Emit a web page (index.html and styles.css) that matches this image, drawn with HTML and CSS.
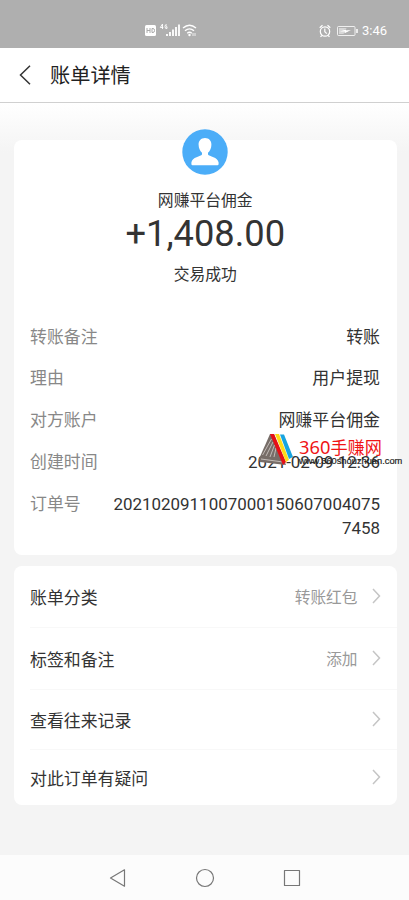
FILE: index.html
```html
<!DOCTYPE html>
<html lang="zh-CN">
<head>
<meta charset="utf-8">
<meta name="viewport" content="width=device-width, initial-scale=1">
<title>账单详情</title>
<link rel="stylesheet" href="styles.css">
</head>
<body>
<div class="status">
  <svg class="status-left" width="54" height="18" viewBox="0 0 54 18" fill="none" stroke="#fff">
    <rect x="1" y="5" width="11" height="11" rx="1.500" fill="#fff" stroke="none"/>
    <path d="M3 8v5M6 8v5M3 10.500h3M8 8.500v4h1q1.500 0 1.500-2t-1.500-2z" stroke="#aaa"/>
    <path d="M18.500 9V4l-2.200 3.500h3M23 5q-2-1-2 1.500T23 8.500V6.700h-1" stroke-width=".9"/>
    <path d="M24 16v-2M27 16v-4M30 16V9.500M33 16V7M36 16V4.500" stroke-width="1.800" transform="translate(-1)"/>
    <path d="M39 8q6.500-5.500 13 0M41 10.700q4.500-3.700 9 0M43.200 13.200q2.300-1.800 4.600 0" stroke-width="1.400"/>
    <circle cx="45.500" cy="15" r="1.200" fill="#fff" stroke="none"/>
    <path d="M49 13v3M51 13v3" stroke-width=".8"/>
  </svg>
  <div class="status-right">
    <svg width="39" height="14" viewBox="0 0 39 14" fill="none" stroke="#fff">
      <circle cx="6" cy="7.500" r="4.700" stroke-width="1.200"/>
      <path d="M.7 3.700 3.500 1.200M8.500 1.200l2.800 2.500M2.800 11.500l-1.300 1.300M9.200 11.500l1.300 1.300M5.800 4.500v3.200l2 2" stroke-width="1.200"/>
      <rect x="18.500" y="2.500" width="17.500" height="9" rx="1" stroke-opacity=".8"/>
      <path d="M20 4h8l-3 2h6l-7 4h-4z" fill="#fff" fill-opacity=".5" stroke="none"/>
      <path d="m21 7.500 6-2v1.200l5-.7-6 3V7.600z" fill="#fff" stroke="none"/>
      <path d="M38 5v4" stroke-width="1.500"/>
    </svg>
    <span>3:46</span>
  </div>
</div>
<header class="header">
  <svg width="12" height="20" viewBox="0 0 12 20"><path d="M11 .8 1.500 10l9.500 9.200" fill="none" stroke="#333" stroke-width="1.500"/></svg>
  <h1>账单详情</h1>
</header>
<main class="main">
  <section class="card bill">
    <div class="summary">
      <svg class="avatar" width="46" height="46" viewBox="0 0 46 46">
        <circle cx="23" cy="23" r="22.700" fill="#4badf8"/>
        <path d="M23 9c-4 0-6.600 2.900-6.400 6.800.1 3.600 1.300 6 3.400 8v1.700c-1 2-10 2.500-10.600 8V35q0 1.200 1.200 1.200h24.800q1.200 0 1.200-1.200v-1.500C36 28 27 27.500 26 25.500v-1.700c2.100-2 3.300-4.400 3.400-8C29.600 11.900 27 9 23 9z" fill="#fff"/>
      </svg>
      <div class="payee">网赚平台佣金</div>
      <div class="amount">+1,408.00</div>
      <div class="state">交易成功</div>
    </div>
    <dl class="details">
      <div class="detail"><dt>转账备注</dt><dd>转账</dd></div>
      <div class="detail"><dt>理由</dt><dd>用户提现</dd></div>
      <div class="detail"><dt>对方账户</dt><dd>网赚平台佣金</dd></div>
      <div class="detail"><dt>创建时间</dt><dd>2021-02-09 12:36</dd></div>
      <div class="detail"><dt>订单号</dt><dd>2021020911007000150607004075<br>7458</dd></div>
    </dl>
    <div class="watermark">
      <svg width="36" height="33" viewBox="0 0 36 33">
        <path d="M11 1h4l12 31L1 29l-1-3z" fill="#776d68"/>
        <path d="m12.500 6-9 16M14 9 7 23M15.500 12 11 24M17 15l-2 9M2 26l22 3" fill="none" stroke="#e4dedb" stroke-width=".7"/>
        <path d="M11 1h4l12 28-3 3z" fill="#e60f16"/>
        <path d="M16 1h4l10 26-3 2z" fill="#ffdb18"/>
        <path d="M21 1.500h4L34 24l-4 2z" fill="#18a4df"/>
      </svg>
      <div class="brand">360<span>手赚网</span></div>
      <div class="url">www.360shouzhuan.com</div>
    </div>
  </section>
  <nav class="card menu">
    <a class="item"><span>账单分类</span><em>转账红包</em><svg width="9" height="16" viewBox="0 0 9 16"><path d="m1 1 6.500 7L1 15"/></svg></a>
    <a class="item"><span>标签和备注</span><em>添加</em><svg width="9" height="16" viewBox="0 0 9 16"><path d="m1 1 6.500 7L1 15"/></svg></a>
    <a class="item"><span>查看往来记录</span><svg width="9" height="16" viewBox="0 0 9 16"><path d="m1 1 6.500 7L1 15"/></svg></a>
    <a class="item"><span>对此订单有疑问</span><svg width="9" height="16" viewBox="0 0 9 16"><path d="m1 1 6.500 7L1 15"/></svg></a>
  </nav>
</main>
<footer class="navbar">
  <svg width="18" height="20" viewBox="0 0 18 20"><path d="M15.500 1.800v16.400L1.500 10z"/></svg>
  <svg width="20" height="20" viewBox="0 0 20 20"><circle cx="10" cy="10" r="8.500"/></svg>
  <svg width="18" height="20" viewBox="0 0 18 20"><rect x="1.500" y="2.500" width="15" height="15"/></svg>
</footer>
</body>
</html>
```
FILE: styles.css
```css
* { box-sizing: border-box; }
body {
  margin: 0;
  height: 900px;
  display: flex;
  flex-direction: column;
  background: #f4f4f4;
  color: #333;
  font-family: Roboto, "Noto Sans CJK SC", sans-serif;
  font-size: 16.9px;
}
svg { display: block; flex: none; }
.status {
  height: 48px;
  flex: none;
  display: flex;
  justify-content: space-between;
  padding: 20px 22px 0 144px;
  background: #afafaf;
}
.status-right {
  display: flex;
  align-items: center;
  gap: 4px;
  height: 21px;
  color: #fff;
  font-size: 13px;
}
.header {
  height: 55px;
  flex: none;
  display: flex;
  align-items: center;
  gap: 19px;
  padding: 0 19px;
  background: #fff;
  border-bottom: 1px solid #d0d0d0;
}
.header h1 {
  margin: -2px 0 0;
  color: #222;
  font-size: 20.2px;
  font-weight: 400;
}
.main {
  flex: 1;
  padding: 37px 12.500px 0 14px;
  background: linear-gradient(#fff, #f4f4f4 50px);
}
.card {
  border-radius: 8px;
  background: #fff;
}
.bill {
  position: relative;
  height: 415px;
}
.summary {
  display: flex;
  flex-direction: column;
  align-items: center;
  font-size: 15.8px;
  line-height: 24px;
}
.avatar { margin-top: -11px; }
.payee { margin-top: 14px; }
.amount {
  margin-top: -1px;
  font-size: 36.3px;
  line-height: 44px;
}
.state { margin-top: 7px; }
.details {
  display: flex;
  flex-direction: column;
  gap: 17.750px;
  margin: 37.500px 16.500px 0 16px;
}
.detail {
  display: flex;
  justify-content: space-between;
  line-height: 24px;
}
.detail dt { color: #888; }
.detail dd {
  margin: 0;
  text-align: right;
  font-size: 16.950px;
}
.watermark {
  position: absolute;
  left: 245px;
  top: 293px;
  width: 144px;
  display: grid;
  grid-template-columns: 36px 1fr;
  column-gap: 4px;
}
.watermark svg { grid-row: 1 / 3; }
.brand {
  height: 23px;
  color: #f01416;
  font-family: "Noto Sans", "Noto Sans CJK SC", sans-serif;
  font-size: 18.300px;
  line-height: 27px;
  white-space: nowrap;
}
.brand span { font-size: 17.2px; }
.url {
  color: #222;
  font: 9.3px/10px "Liberation Sans", Arial, sans-serif;
  -webkit-text-stroke: 0.2px #222;
}
.menu {
  height: 239px;
  margin-top: 10.500px;
  display: grid;
  grid-template-rows: 62px 62px 60px 55px;
}
.item {
  display: flex;
  align-items: center;
  margin-left: 16px;
  padding-right: 16px;
  border-bottom: 1px solid #f8f8f8;
}
.item:last-child { border-bottom: 0; }
.item span { flex: 1; }
.item em {
  margin-right: 14px;
  color: #999;
  font-size: 15.7px;
  font-style: normal;
}
.item path {
  fill: none;
  stroke: #c5c5c5;
  stroke-width: 1.500;
}
.navbar {
  height: 45px;
  flex: none;
  display: flex;
  justify-content: space-between;
  align-items: center;
  padding: 0 108px 0 109px;
  background: #fcfcfc;
}
.navbar svg {
  fill: none;
  stroke: #777;
  stroke-width: 1.200;
  stroke-linejoin: round;
}
```
